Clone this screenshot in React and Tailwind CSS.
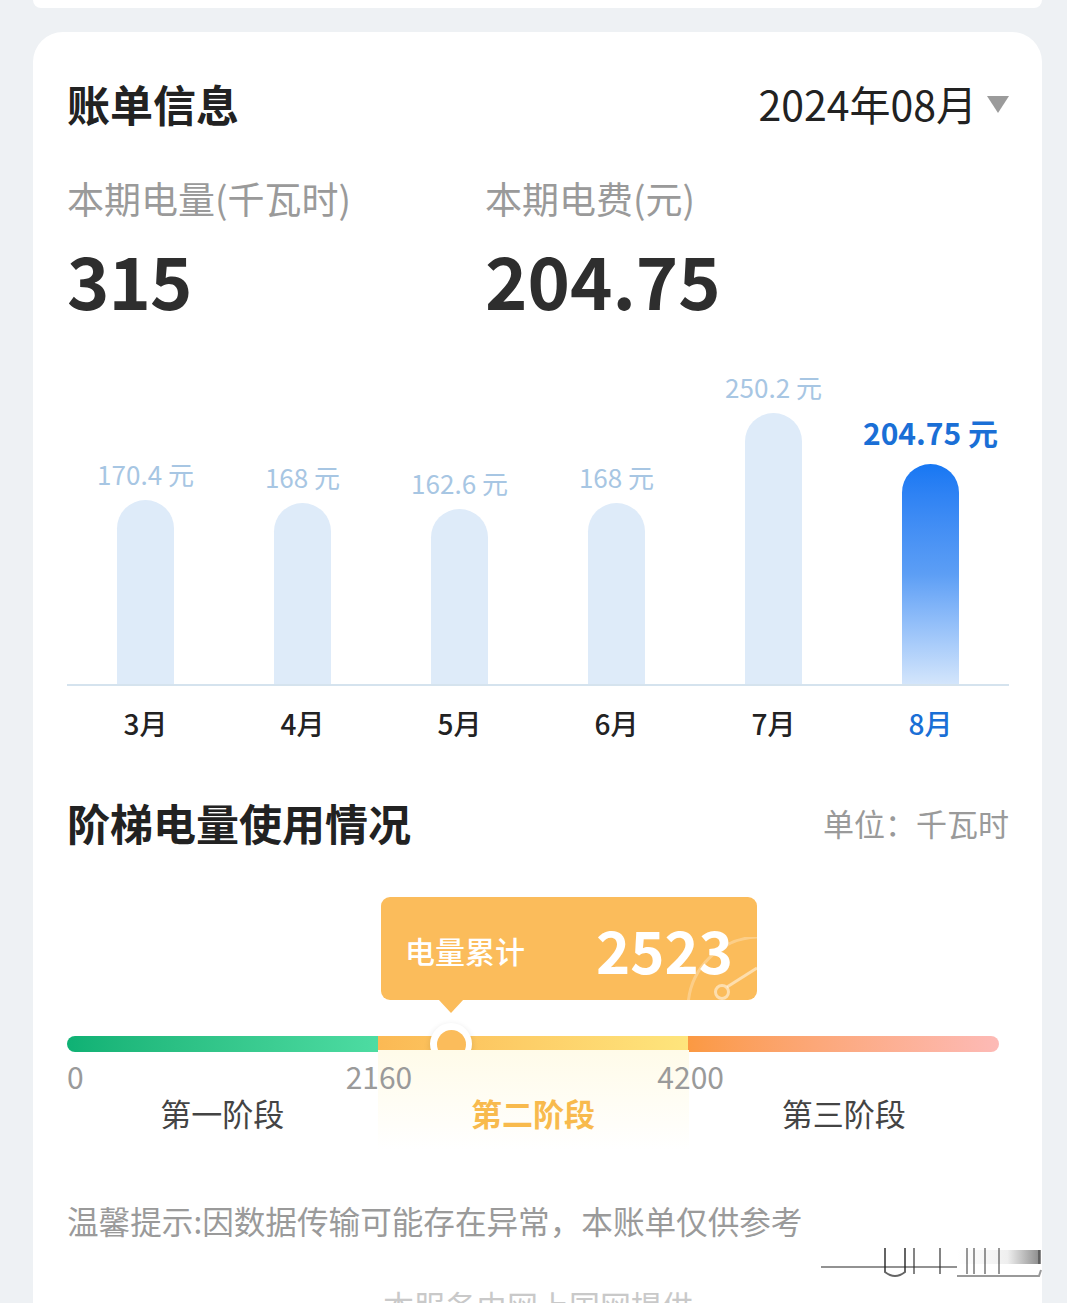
import React from 'react';

const bars = [
  { m: '3月', v: '170.4 元', h: 184 },
  { m: '4月', v: '168 元', h: 181 },
  { m: '5月', v: '162.6 元', h: 175 },
  { m: '6月', v: '168 元', h: 181 },
  { m: '7月', v: '250.2 元', h: 271 },
  { m: '8月', v: '204.75 元', h: 220, active: true },
];

export default function App() {
  return (
    <div className="h-[1303px] overflow-hidden bg-[#eef1f4] pl-[33px] pr-[25px] font-['Noto_Sans_CJK_SC',sans-serif]">
      <div className="h-[8px] rounded-b-[28px] bg-white" />
      <div className="relative mt-[24px] h-[1300px] rounded-t-[30px] bg-white pl-[34px] pr-[33px] pt-[41px]">
        {/* header */}
        <div className="flex h-[60px] items-center justify-between">
          <div className="text-[43px] font-bold leading-none text-[#222]">账单信息</div>
          <div className="flex items-center">
            <span className="text-[41px] leading-none text-[#222]">2024年08月</span>
            <svg width="22" height="17" viewBox="0 0 22 17" className="ml-[10px] mt-[2px]">
              <path d="M0 0 L22 0 L11 17 Z" fill="#9b9b9b" />
            </svg>
          </div>
        </div>

        {/* labels */}
        <div className="mt-[40px] flex h-[50px] items-center text-[37px] leading-none text-[#9a9a9a]">
          <div className="w-[418px]">本期电量(千瓦时)</div>
          <div>本期电费(元)</div>
        </div>
        <div className="mt-[16px] flex h-[80px] items-center text-[72px] font-bold leading-none text-[#2e2e2e]">
          <div className="w-[418px] tracking-[-1px]">315</div>
          <div>204.75</div>
        </div>

        {/* chart */}
        <div className="mt-[40px] flex h-[325px] items-end">
          {bars.map((b) => (
            <div key={b.m} className="flex flex-1 flex-col items-center justify-end">
              {b.active ? (
                <div className="mb-[14px] h-[36px] text-[30px] font-bold leading-[36px] text-[#1a6fd6]">{b.v}</div>
              ) : (
                <div className="mb-[11px] h-[30px] text-[26px] leading-[30px] text-[#a7c6e3]">{b.v}</div>
              )}
              <div
                className={
                  b.active
                    ? 'w-[57px] rounded-t-full bg-gradient-to-b from-[#1677f3] via-[#5c9ef5] to-[#d3e5fb]'
                    : 'w-[57px] rounded-t-full bg-[#deebf9]'
                }
                style={{ height: b.h }}
              />
            </div>
          ))}
        </div>
        <div className="h-[2px] bg-[#d5e3ee]" />
        <div className="mt-[17px] flex h-[40px] items-center">
          {bars.map((b) => (
            <div
              key={b.m}
              className={
                b.active
                  ? 'flex-1 text-center text-[28px] font-medium leading-none text-[#1a6fd6]'
                  : 'flex-1 text-center text-[28px] font-medium leading-none text-[#222]'
              }
            >
              {b.m}
            </div>
          ))}
        </div>

        {/* ladder section */}
        <div className="mt-[49px] flex h-[60px] items-center justify-between">
          <div className="text-[43px] font-bold leading-none text-[#222]">阶梯电量使用情况</div>
          <div className="text-[31px] leading-none text-[#9a9a9a]">单位：千瓦时</div>
        </div>

        {/* tooltip */}
        <div className="relative ml-[314px] mt-[45px] h-[103px] w-[376px] rounded-[9px] bg-[#fbbc5b]">
          <div className="relative flex h-full items-center justify-between overflow-hidden rounded-[9px] pl-[24px] pr-[24px]">
            <span className="mt-[2px] text-[30px] font-medium leading-none text-white">电量累计</span>
            <span className="text-[58px] font-bold leading-none text-white">2523</span>
            <svg className="absolute right-0 bottom-0" width="80" height="63" viewBox="0 0 80 63" fill="none">
              <circle cx="83" cy="72" r="72" stroke="rgba(255,255,255,0.28)" strokeWidth="3" />
              <circle cx="45" cy="55" r="6.5" stroke="rgba(255,255,255,0.5)" strokeWidth="3" />
              <path d="M50 50 L80 31" stroke="rgba(255,255,255,0.5)" strokeWidth="3" />
            </svg>
          </div>
          <svg className="absolute left-[57px] top-[102px]" width="26" height="14" viewBox="0 0 26 14">
            <path d="M0 0 L26 0 L13 14 Z" fill="#fbbc5b" />
          </svg>
        </div>

        {/* progress bar */}
        <div className="relative mt-[36px] w-[932px]">
          <div className="flex h-[16px] overflow-hidden rounded-full">
            <div className="flex-1 bg-gradient-to-r from-[#0eb174] to-[#4ddca2]" />
            <div className="flex-1 bg-gradient-to-r from-[#fbb954] to-[#fee57c]" />
            <div className="flex-1 bg-gradient-to-r from-[#fb9942] to-[#fdbab6]" />
          </div>
          <div className="absolute left-[363px] top-[-13px] flex h-[42px] w-[42px] items-center justify-center rounded-full bg-white shadow-[0_2px_6px_rgba(0,0,0,0.12)]">
            <div className="h-[29px] w-[29px] rounded-full bg-[#fbbc5b]" />
          </div>
        </div>

        <div className="relative w-[932px]">
          <div className="absolute left-[311px] top-[-8px] h-[100px] w-[311px] bg-gradient-to-b from-[#fffbe9] to-white" />
          <div className="relative mt-[6px] grid h-[36px] grid-cols-3 items-center text-[30px] leading-none text-[#9a9a9a]">
            <div>0</div>
            <div className="ml-[-32px]">2160</div>
            <div className="ml-[-31px]">4200</div>
          </div>
          <div className="relative grid h-[36px] grid-cols-3 items-center text-center text-[31px] leading-none">
            <div className="text-[#444]">第一阶段</div>
            <div className="font-bold text-[#f8ba4d]">第二阶段</div>
            <div className="text-[#444]">第三阶段</div>
          </div>
        </div>

        {/* tip */}
        <div className="mt-[71px] flex h-[40px] items-center text-[31.6px] leading-none text-[#9a9a9a]">
          温馨提示:因数据传输可能存在异常，本账单仅供参考
        </div>
        <div className="mt-[43px] flex h-[40px] items-center justify-center text-[31px] leading-none text-[#c9c9c9]">
          本服务由网上国网提供
        </div>

        {/* watermark artifact */}
        <svg className="absolute left-[784px] top-[1214px]" width="226" height="36" viewBox="0 0 226 36">
          <defs>
            <linearGradient id="wm" x1="0" x2="1" y1="0" y2="0">
              <stop offset="0" stopColor="#ffffff" />
              <stop offset="0.6" stopColor="#e8e8e8" />
              <stop offset="1" stopColor="#555" />
            </linearGradient>
          </defs>
          <rect x="140" y="4" width="84" height="14" fill="url(#wm)" opacity="0.7" />
          <path d="M4 21 L140 21" stroke="#777" strokeWidth="2" opacity="0.8" />
          <path d="M68 2 L68 26 Q78 34 88 26 L88 2" stroke="#222" strokeWidth="2" fill="none" opacity="0.7" />
          <path d="M97 2 L97 28" stroke="#333" strokeWidth="2" opacity="0.6" />
          <path d="M123 2 L123 28" stroke="#333" strokeWidth="2" opacity="0.6" />
          <path d="M150 2 L150 28 M157 2 L157 28 M168 2 L168 28 M182 2 L182 28" stroke="#333" strokeWidth="2" opacity="0.5" />
          <path d="M222 4 L222 18 M224 24 L222 30 L140 30" stroke="#333" strokeWidth="2" opacity="0.5" fill="none" />
        </svg>
      </div>
    </div>
  );
}
